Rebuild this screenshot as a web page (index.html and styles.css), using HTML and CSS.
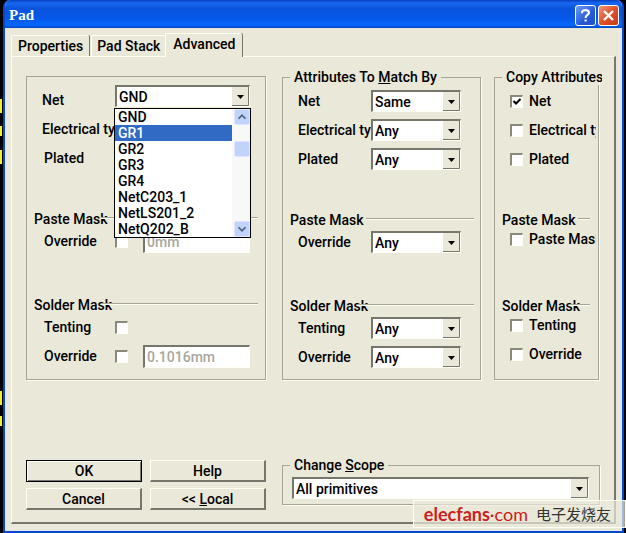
FILE: index.html
```html
<!DOCTYPE html>
<html lang="en">
<head>
  <meta charset="UTF-8" />
  <meta name="viewport" content="width=device-width, initial-scale=1.0" />
  <title>Pad</title>
  <link rel="stylesheet" href="styles.css">
</head>
<body>
  <div class="window">
    <header class="titlebar">
      <h1>Pad</h1>
      <button class="caption help" aria-label="Help">
        <svg width="19" height="19" viewBox="0 0 19 19"><path d="M6 7.2V6.6C6 3.2 13 3.2 13 6.8C13 9 9.6 9 9.6 12M9.6 13.4V15.6" fill="none" stroke="#fff" stroke-width="2.2"/></svg>
      </button>
      <button class="caption close" aria-label="Close">
        <svg width="19" height="19" viewBox="0 0 19 19"><path d="M5 5L14 14M14 5L5 14" fill="none" stroke="#fff" stroke-width="2.4"/></svg>
      </button>
    </header>

    <main>
      <nav class="tabs" role="tablist">
        <button class="tab" role="tab">Properties</button>
        <button class="tab" role="tab">Pad Stack</button>
        <button class="tab active" role="tab" aria-selected="true">Advanced</button>
      </nav>

      <div class="page">
        <div class="groups">
          <fieldset class="group values">
            <div class="row">
              <label for="net">Net</label>
              <div class="combo">
                <select id="net"><option>GND</option></select>
                <div class="dropdown">
                  <ul role="listbox" aria-label="Net">
                    <li role="option">GND</li>
                    <li role="option" class="selected" aria-selected="true">GR1</li>
                    <li role="option">GR2</li>
                    <li role="option">GR3</li>
                    <li role="option">GR4</li>
                    <li role="option">NetC203_1</li>
                    <li role="option">NetLS201_2</li>
                    <li role="option">NetQ202_B</li>
                  </ul>
                  <div class="scrollbar">
                    <svg class="arrow" viewBox="0 0 16 16"><path d="M4 10L8 6L12 10" /></svg>
                    <span class="thumb"></span>
                    <svg class="arrow" viewBox="0 0 16 16"><path d="M4 6L8 10L12 6" /></svg>
                  </div>
                </div>
              </div>
            </div>
            <div class="row"><label>Electrical type</label></div>
            <div class="row sub"><label>Plated</label></div>

            <h2 class="paste">Paste Mask</h2>
            <div class="row sub">
              <label for="pasteOn">Override</label>
              <input type="checkbox" id="pasteOn">
              <input type="text" value="0mm" aria-label="Paste mask value" disabled>
            </div>

            <h2 class="solder">Solder Mask</h2>
            <div class="row sub">
              <label for="tenting">Tenting</label>
              <input type="checkbox" id="tenting">
            </div>
            <div class="row sub">
              <label for="solderOn">Override</label>
              <input type="checkbox" id="solderOn">
              <input type="text" value="0.1016mm" aria-label="Solder mask value" disabled>
            </div>
          </fieldset>

          <fieldset class="group match">
            <legend>Attributes To <u>M</u>atch By</legend>
            <div class="row">
              <label for="mNet">Net</label>
              <select id="mNet"><option>Same</option></select>
            </div>
            <div class="row">
              <label for="mType">Electrical type</label>
              <select id="mType"><option>Any</option></select>
            </div>
            <div class="row">
              <label for="mPlated">Plated</label>
              <select id="mPlated"><option>Any</option></select>
            </div>

            <h2 class="paste">Paste Mask</h2>
            <div class="row">
              <label for="mPaste">Override</label>
              <select id="mPaste"><option>Any</option></select>
            </div>

            <h2 class="solder">Solder Mask</h2>
            <div class="row">
              <label for="mTenting">Tenting</label>
              <select id="mTenting"><option>Any</option></select>
            </div>
            <div class="row">
              <label for="mSolder">Override</label>
              <select id="mSolder"><option>Any</option></select>
            </div>
          </fieldset>

          <fieldset class="group copy">
            <legend>Copy Attributes</legend>
            <div class="row"><input type="checkbox" id="cNet" checked><label for="cNet">Net</label></div>
            <div class="row"><input type="checkbox" id="cType"><label for="cType">Electrical type</label></div>
            <div class="row"><input type="checkbox" id="cPlated"><label for="cPlated">Plated</label></div>

            <h2 class="paste">Paste Mask</h2>
            <div class="row"><input type="checkbox" id="cPaste"><label for="cPaste">Paste Mask</label></div>

            <h2 class="solder">Solder Mask</h2>
            <div class="row"><input type="checkbox" id="cTenting"><label for="cTenting">Tenting</label></div>
            <div class="row"><input type="checkbox" id="cSolder"><label for="cSolder">Override</label></div>
          </fieldset>
        </div>

        <div class="footer">
          <div class="buttons">
            <button class="btn default">OK</button>
            <button class="btn">Help</button>
            <button class="btn">Cancel</button>
            <button class="btn">&lt;&lt; <u>L</u>ocal</button>
          </div>
          <fieldset class="scope">
            <legend><label for="scope">Change <u>S</u>cope</label></legend>
            <select id="scope"><option>All primitives</option></select>
          </fieldset>
        </div>
      </div>
    </main>
  </div>

  <div class="watermark">
    <span class="brand"><b>elecfans</b>·com</span>
    <span class="cn" lang="zh">电子发烧友</span>
  </div>
</body>
</html>
```
FILE: styles.css
```css
* { box-sizing: border-box; }
html { background: #000; }
body {
  margin: 0;
  padding: 0 2px 0 3px;
  position: relative;
  background: linear-gradient(#000 99px, #ee3 99px, #ee3 113px, #000 113px, #000 126px, #ee3 126px, #ee3 136px, #000 136px, #000 150px, #ee3 150px, #ee3 164px, #000 164px, #000 391px, #ee3 391px, #ee3 405px, #000 405px, #000 416px, #ee3 416px, #ee3 426px, #000 426px) no-repeat left top / 2px 100%;
  font: 500 14px/16px Roboto, "Liberation Sans", sans-serif;
  color: #000;
}
button, select, input { font: inherit; color: inherit; margin: 0; }
fieldset { margin: 0; min-width: 0; border: 1px solid #a5a496; box-shadow: 1px 1px 0 #fffff4; }
legend { padding: 0 4px; white-space: nowrap; }

.window {
  background: #eae8d8;
  border: 2px solid #0a46c8;
  border-top: 0;
  border-radius: 7px 7px 0 0;
  overflow: hidden;
}
.titlebar {
  display: flex;
  align-items: center;
  gap: 2px;
  height: 28px;
  padding: 2px 5px 0 4px;
  margin: 0 -2px;
  background: linear-gradient(#0a3cc0, #1668f0 3px, #0a52dc 9px, #0558e8 18px, #0668fc 25px, #0348c4);
}
.titlebar h1 {
  flex: 1;
  margin: 0 0 0 2px;
  font: bold 15px/16px "Liberation Serif", serif;
  color: #fff;
}
.caption {
  width: 21px;
  height: 21px;
  padding: 0;
  border: 1px solid #fff;
  border-radius: 3px;
}
.caption svg { display: block; }
.help { background: linear-gradient(135deg, #6c9cf4, #2458dc 60%, #2050c0); }
.close { background: linear-gradient(135deg, #f0987c, #e0502c 50%, #c03c18); }

main {
  padding: 5px 4px 6px 6px;
  border: solid #dfe8f4;
  border-width: 0 2px 1px 0;
}
.tabs { display: flex; align-items: flex-end; height: 23px; }
.tab {
  height: 21px;
  padding: 0 6px;
  background: none;
  border: solid #fffff4;
  border-width: 1px 0 0 1px;
  box-shadow: 1px 0 0 #77766c;
  border-radius: 2px 2px 0 0;
  margin-right: 2px;
}
.tab:nth-child(2) { padding: 0 5px; box-shadow: none; margin: 0; }
.tab.active {
  height: 24px;
  margin-bottom: -1px;
  padding: 0 7px 3px;
  background: #eae8d8;
  position: relative;
  z-index: 1;
}
.page {
  padding: 12px 14px 12px;
  border: 1px solid #fffff4;
  border-right: 2px solid #77766c;
  border-bottom: 2px solid #77766c;
}

.groups {
  display: grid;
  grid-template-columns: minmax(0, 240fr) minmax(0, 200fr) minmax(0, 106fr);
  column-gap: 14px;
}
.group { padding: 2px 19px 7px 15px; }
.values { margin-top: 7px; padding: 9px 15px 7px; }
.match { margin: 0 -1px 0 2px; }
.copy { margin-right: 1px; padding: 2px 2px 7px 15px; }
.group legend { margin-left: -8px; }
.copy legend { width: 100px; margin: 0 -4px 0 -8px; padding-right: 0; overflow: hidden; }

.row { display: flex; align-items: center; height: 28px; margin-bottom: 1px; }
.row label { flex: none; width: 73px; overflow: hidden; white-space: nowrap; }
.row.sub label { padding-left: 2px; }
.row select, .combo { flex: 1; min-width: 0; }
.copy .row label { flex: 1; width: auto; margin-left: 6px; }

h2 {
  position: relative;
  height: 16px;
  margin: 0 -12px 0 -8px;
  font: inherit;
  white-space: nowrap;
}
h2::after {
  content: "";
  position: absolute;
  left: 67px;
  right: 4px;
  top: 6px;
  border-top: 1px solid #a5a496;
  border-bottom: 1px solid #fffff4;
}
h2.paste { margin-top: 39px; }
h2.solder { margin-top: 42px; }
.match h2 { margin-right: -17px; }
.match .paste::after, .copy .paste::after { left: 76px; }
.copy h2 { margin-right: 2px; margin-bottom: -3px; }
.copy h2.solder { margin-top: 45px; }

select {
  display: block;
  width: 100%;
  height: 22px;
  padding: 0 20px 0 2px;
  appearance: none;
  border: 2px solid #77766c;
  border-right: 1px solid #fffff4;
  border-bottom: 1px solid #fffff4;
  border-radius: 0;
  background: #fff url("data:image/svg+xml,%3Csvg xmlns='http://www.w3.org/2000/svg' width='17' height='19'%3E%3Cpath fill='%23eae8d8' d='M0 0h17v19H0z'/%3E%3Cpath fill='none' stroke='%2377766c' d='M16.500 0v18.500H0'/%3E%3Cpath d='M5 8h7L8.500 12z'/%3E%3C/svg%3E") no-repeat right center;
}
input[type="checkbox"] {
  flex: none;
  appearance: none;
  width: 13px;
  height: 13px;
  border: 2px solid #8a897e;
  border-right: 1px solid #fffff4;
  border-bottom: 1px solid #fffff4;
  background: #fff;
}
input[type="checkbox"]:checked {
  background: #fff url("data:image/svg+xml,%3Csvg xmlns='http://www.w3.org/2000/svg' width='10' height='10'%3E%3Cpath fill='none' stroke='%23000' stroke-width='2' d='M1.500 4L4 6.500L8.500 2'/%3E%3C/svg%3E") no-repeat;
}
input[type="text"] {
  flex: 1;
  min-width: 0;
  height: 23px;
  margin-left: 15px;
  padding: 0 2px;
  border: 2px solid #77766c;
  border-right: 1px solid #fffff4;
  border-bottom: 1px solid #fffff4;
  background: #fff;
  color: #a8a79c;
}

.combo { position: relative; margin-top: -8px; }
.dropdown {
  position: absolute;
  z-index: 2;
  top: 23px;
  left: -1px;
  right: -1px;
  display: flex;
  border: 1px solid #000;
  background: #fff;
}
.dropdown ul { flex: 1; margin: 0; padding: 0; list-style: none; }
.dropdown li { padding-left: 3px; }
.dropdown .selected { background: #316ac5; color: #fff; }
.scrollbar {
  display: flex;
  flex-direction: column;
  justify-content: space-between;
  width: 18px;
  padding-left: 2px;
  background: #f8f8f8;
}
.arrow, .thumb { height: 16px; background: #c2d3fa; border: 1px solid #dce6fc; border-radius: 2px; }
.arrow path { fill: none; stroke: #4d6185; stroke-width: 2; }
.thumb { margin-bottom: 48px; }

.footer {
  display: grid;
  grid-template-columns: minmax(0, 240fr) minmax(0, 318fr);
  column-gap: 16px;
  margin-top: 77px;
}
.buttons {
  display: grid;
  grid-template-columns: 1fr 1fr;
  gap: 6px 8px;
  padding-top: 3px;
}
.btn {
  height: 22px;
  padding: 0;
  background: #eae8d8;
  border: 1px solid #fffff4;
  border-right: 2px solid #77766c;
  border-bottom: 2px solid #77766c;
}
.btn.default { border: 1px solid #000; box-shadow: inset 1px 1px 0 #fffff4, inset -1px -1px 0 #77766c; }
.scope { padding: 4px 10px 5px 9px; align-self: start; }
.scope legend { margin-left: -2px; }

.watermark {
  position: absolute;
  right: 0;
  bottom: 5px;
  z-index: 3;
  display: flex;
  align-items: center;
  gap: 8px;
  height: 28px;
  padding: 0 14px 0 10px;
  background: rgba(234, 232, 216, 0.7);
  border: 1px solid #fffff4;
}
.brand { font: 18px/26px Lato, sans-serif; color: #cc2020; }
.cn { font: 15px/20px "Noto Sans CJK SC", sans-serif; color: #333; }
```
